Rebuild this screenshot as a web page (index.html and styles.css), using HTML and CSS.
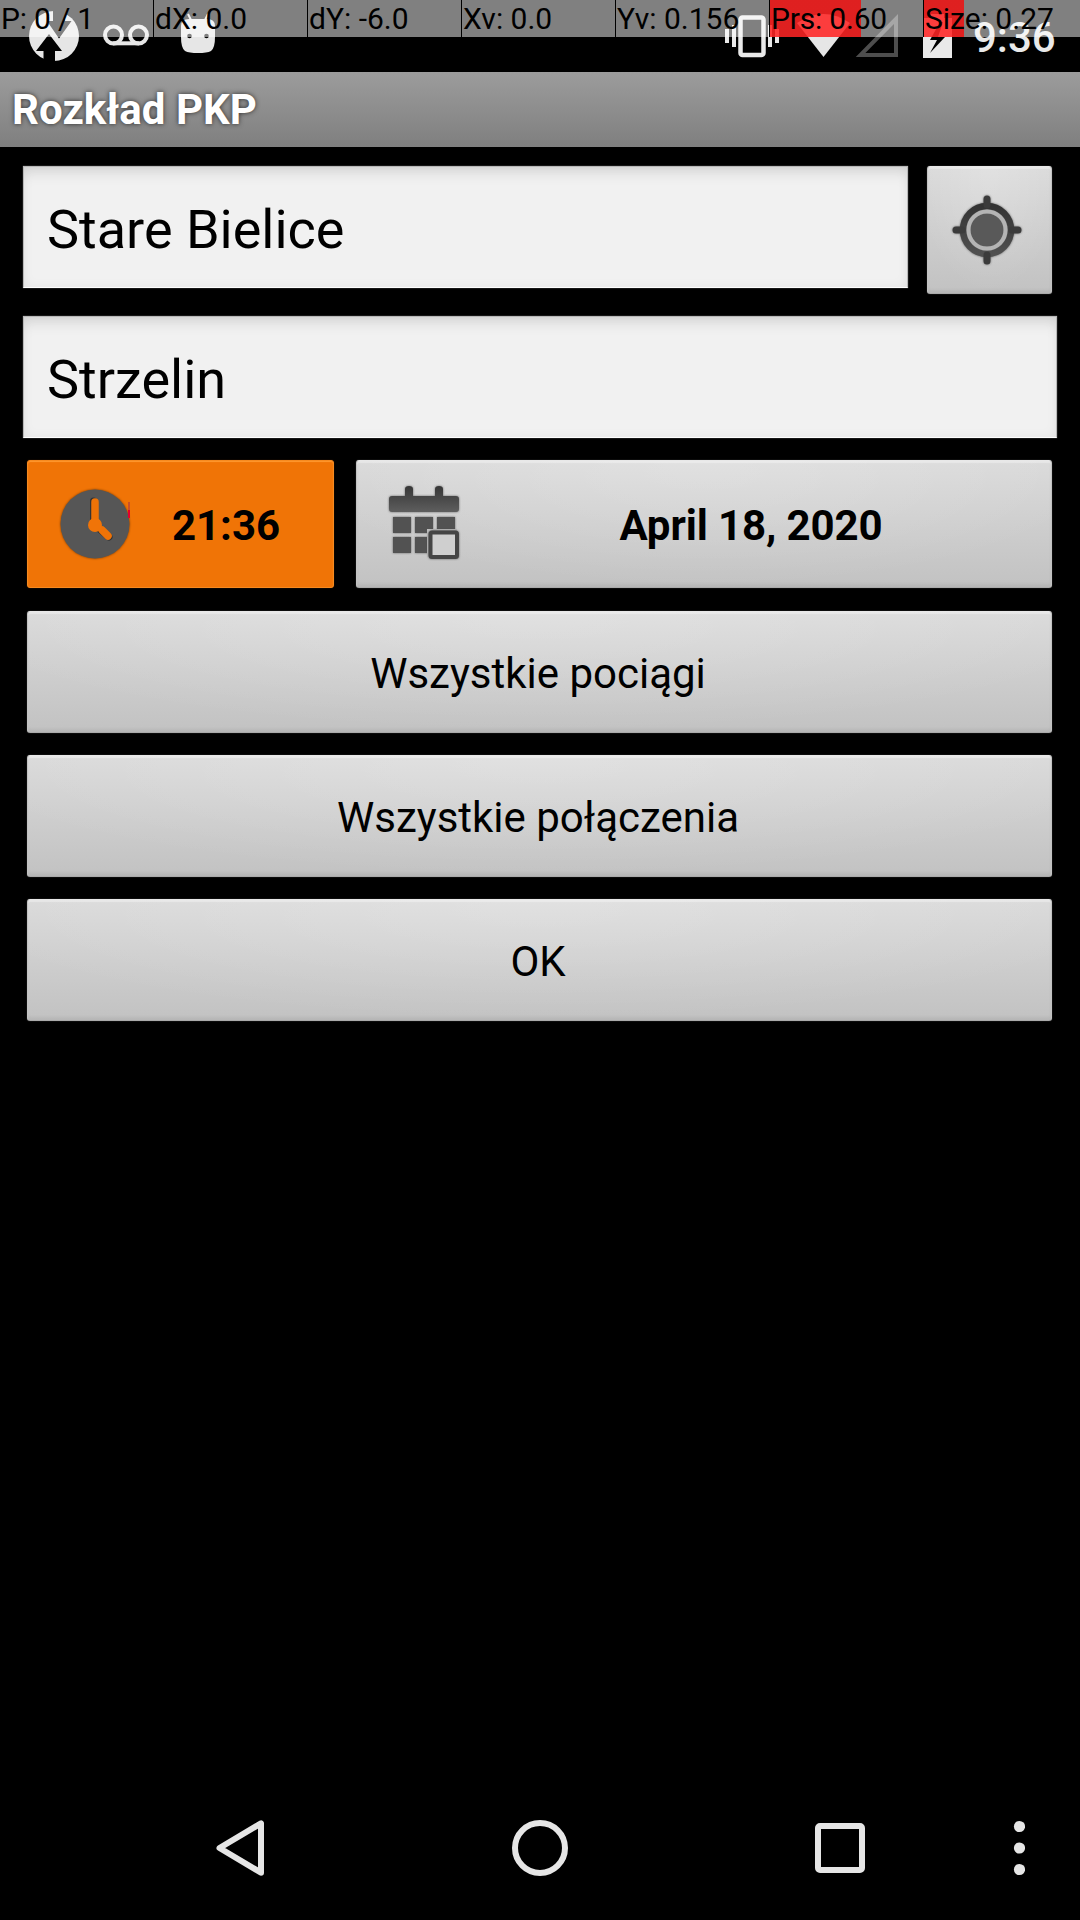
FILE: index.html
```html
<!DOCTYPE html>
<html lang="pl">
<head>
<meta charset="utf-8">
<title>Rozkład PKP</title>
<link rel="stylesheet" href="styles.css">
</head>
<body>
<header class="status">
  <div class="status-left">
    <svg width="72" height="72" viewBox="18 0 72 72"><circle cx="54" cy="36" r="25" fill="#e6e6e6"/><path d="M53 10V21H47L59 38.500L71.500 21H65V10Z" fill="#000"/><path d="M49 32L58.500 42L61 51L49 52L42 40Z" fill="#e6e6e6"/><path d="M49 34L36 51H43.500V63H55V51H62Z" fill="#000"/></svg>
    <svg width="72" height="72" viewBox="90 0 72 72" fill="none" stroke="#e6e6e6" stroke-width="4"><circle cx="113.500" cy="35" r="8.500"/><circle cx="138.500" cy="35" r="8.500"/><path d="M113 43.300H139"/></svg>
    <svg width="72" height="72" viewBox="162 0 72 72"><path d="M181 26Q181 19 189 19H207Q215 19 215 26V37Q215 48 211 51Q207 53 198 53Q189 53 185 51Q181 48 181 37Z" fill="#e6e6e6"/><path d="M188 14L191 20M208 14L205 20" stroke="#e6e6e6" stroke-width="2"/><circle cx="189.500" cy="36" r="2.300"/><circle cx="206.500" cy="36" r="2.300"/></svg>
  </div>
  <div class="status-right">
    <svg width="64" height="72" viewBox="720 0 64 72"><rect x="740.500" y="17.500" width="23" height="37.500" rx="2" fill="none" stroke="#e9e9e9" stroke-width="4.500"/><path d="M727 29V43M734 25V47M770 25V47M777 29V43" stroke="#e9e9e9" stroke-width="4"/></svg>
    <svg width="68" height="72" viewBox="784 0 68 72"><path d="M797 23Q823.500 5 850 23L823.500 57Z" fill="#e6e6e6"/></svg>
    <svg width="52" height="72" viewBox="852 0 52 72"><path d="M896 19V55H860.500Z" fill="none" stroke="#4d4d4d" stroke-width="4"/></svg>
    <svg width="60" height="72" viewBox="904 0 60 72"><path d="M923 18H931V14H944V18H952V58H923Z" fill="#e9e9e9"/><path d="M940 22L930 40H937L930 53L945 37H938L943 22Z" fill="#000"/></svg>
    <time class="clock">9:36</time>
  </div>
  <div class="pointer">
    <span class="cell tight">P: 0 / 1</span>
    <span class="cell">dX: 0.0</span>
    <span class="cell">dY: -6.0</span>
    <span class="cell">Xv: 0.0</span>
    <span class="cell">Yv: 0.156</span>
    <span class="cell level tight" style="--level: 91px">Prs: 0.60</span>
    <span class="cell level" style="--level: 40px">Size: 0.27</span>
  </div>
</header>
<h1 class="title">Rozkład PKP</h1>
<main class="form">
  <div class="row from">
    <div class="field">Stare Bielice</div>
    <button class="btn locate" aria-label="Lokalizacja">
      <svg width="80" height="80" viewBox="0 0 80 80"><defs><linearGradient id="ink" x2="0" y2="1"><stop offset="0" stop-color="#333"/><stop offset="1" stop-color="#505050"/></linearGradient></defs><g class="soft"><circle cx="40" cy="40" r="24" fill="none" stroke="url(#ink)" stroke-width="6.500"/><circle cx="40" cy="40" r="16.500" fill="#595959"/><circle cx="40" cy="40" r="18.500" fill="none" stroke="#b4b4b4" stroke-width="4"/><path d="M40 9V15M40 65V71M9 40H15M65 40H71" stroke="#3b3b3b" stroke-width="7" stroke-linecap="round"/></g></svg>
    </button>
  </div>
  <div class="field to">Strzelin</div>
  <div class="row when">
    <button class="btn time">
      <svg width="80" height="80" viewBox="0 0 80 80"><g class="soft"><circle cx="40" cy="40" r="34.500" fill="#565656"/><path d="M38.500 17V40L54 53" fill="none" stroke="#333" stroke-width="7" stroke-linecap="round"/><path d="M40 18V40M47 46L53 52" fill="none" stroke="#ee7307" stroke-width="7.500" stroke-linecap="round"/><circle cx="40" cy="41" r="7" fill="#f07408"/></g><path d="M74 18V26" stroke="#c8502a" stroke-width="2"/><path d="M74 26V34" stroke="#e5002c" stroke-width="2"/></svg>
      <span class="label">21:36</span>
    </button>
    <button class="btn date">
      <svg width="80" height="80" viewBox="0 3 80 80"><defs><linearGradient id="head" x2="0" y2="1"><stop offset="0" stop-color="#363636"/><stop offset="1" stop-color="#5e5e5e"/></linearGradient></defs><g class="soft"><path d="M5 18Q5 15 8 15H21V8Q21 5 25 5T29 8V15H51V8Q51 5 55 5T59 8V15H72Q75 15 75 18V28Q75 31 72 31H8Q5 31 5 28Z" fill="url(#head)"/><path d="M9 36H27V52H9ZM31 36H49V52H31ZM53 36H71V52H53ZM9 56H27V72H9ZM31 56H49V72H31Z" fill="#525252"/></g><rect x="43" y="48" width="30" height="28" fill="#c0c0c0"/><rect class="soft" x="46.500" y="51.500" width="26.500" height="24.500" rx="1.500" fill="#cfcfcf" stroke="#454545" stroke-width="4"/></svg>
      <span class="label">April 18, 2020</span>
    </button>
  </div>
  <button class="btn wide">Wszystkie pociągi</button>
  <button class="btn wide">Wszystkie połączenia</button>
  <button class="btn wide">OK</button>
</main>
<nav class="nav">
  <svg width="60" height="60" viewBox="0 0 60 60"><path d="M51 5.300V54.700L9.500 30Z"/></svg>
  <svg width="60" height="60" viewBox="0 0 60 60"><circle cx="30" cy="30" r="25"/></svg>
  <svg width="60" height="60" viewBox="0 0 60 60"><rect x="8" y="8" width="44" height="44" rx="2"/></svg>
  <svg class="dots" width="12" height="60" viewBox="0 0 12 60"><circle cx="6.500" cy="8.500" r="5.600"/><circle cx="6.500" cy="30" r="5.600"/><circle cx="6.500" cy="51.500" r="5.600"/></svg>
</nav>
</body>
</html>
```
FILE: styles.css
```css
* { box-sizing: border-box; }
body {
  margin: 0;
  width: 1080px;
  height: 1920px;
  display: flex;
  flex-direction: column;
  background: #000;
  font-family: Roboto, sans-serif;
  overflow: hidden;
}
svg { display: block; flex: none; }

.status {
  position: relative;
  height: 72px;
  display: flex;
  justify-content: space-between;
  padding: 0 24px 0 18px;
}
.status-left, .status-right { display: flex; }
.clock {
  width: 92px;
  padding-left: 9px;
  font-size: 42px;
  font-weight: 500;
  line-height: 75px;
  color: #e9e9e9;
  white-space: nowrap;
}

/* Pointer-location readout drawn over the status bar */
.pointer {
  position: absolute;
  inset: 0 0 auto 0;
  height: 37px;
  display: grid;
  grid-template-columns: 153px repeat(5, 153px) 156px;
  column-gap: 1px;
  font-size: 30px;
  line-height: 37px;
  color: #000;
}
.cell {
  padding-left: 1px;
  white-space: pre;
  background: rgba(255, 255, 255, 0.5);
  box-shadow: -1px 0 #000;
}
.tight { letter-spacing: -0.2px; }
.level {
  background:
    linear-gradient(rgba(255, 0, 0, 0.75), rgba(255, 0, 0, 0.75)) 0 0 / var(--level) 100% no-repeat,
    rgba(255, 255, 255, 0.5);
}

.title {
  margin: 0;
  height: 75px;
  padding-left: 12px;
  font-size: 42px;
  font-weight: 700;
  line-height: 75px;
  letter-spacing: 0.05px;
  color: #fff;
  background: linear-gradient(#9c9c9c, #7f7f7f);
  text-shadow: 0 0 5px rgba(0, 0, 0, 0.7);
}

.form {
  display: flex;
  flex-direction: column;
  padding: 19px 28px 0 27px;
}
.row { display: flex; align-items: flex-start; }
.field {
  height: 122px;
  padding-left: 23px;
  font-size: 54px;
  line-height: 126px;
  color: #000;
  background: #f1f1f1;
  border: 1px solid #b8b8b8;
  border-bottom-color: #fff;
  box-shadow: inset 0 12px 16px -8px rgba(0, 0, 0, 0.12), inset 0 0 12px rgba(0, 0, 0, 0.05), 0 0 1px #888;
}
.from { margin-left: -4px; gap: 19px; }
.from .field { width: 885px; }
.to { margin: 22px -5px 22px -4px; }

.btn {
  display: flex;
  align-items: center;
  justify-content: center;
  height: 128px;
  padding: 0;
  border: 1px solid #c2c2c2;
  border-top-color: #e8e8e8;
  border-bottom-color: #aaa;
  border-radius: 3px;
  font: 400 42px/50px Roboto, sans-serif;
  color: #000;
  background:
    radial-gradient(ellipse 60% 100% at 50% 0, rgba(255, 255, 255, 0.2), transparent),
    linear-gradient(#dadada, #c2c2c2);
  box-shadow: inset 0 2px 1px rgba(255, 255, 255, 0.35), inset 0 -3px 3px rgba(0, 0, 0, 0.06), 0 0 1px #777;
}
.soft { filter: drop-shadow(0 0 1px rgba(0, 0, 0, 0.5)); }
.locate { flex: 1; padding-right: 5px; }
.when { gap: 22px; margin-bottom: 23px; }
.time, .date { justify-content: flex-start; padding-left: 27px; font-weight: 700; }
.time {
  width: 307px;
  background: #f07406;
  border-color: #f58a20;
  box-shadow: inset 0 1px 1px #ff9a30, 0 0 1px #7a3a00;
}
.date { flex: 1; }
.label { flex: 1; padding-top: 3px; text-align: center; }
.time .label { padding-right: 16px; }
.date .label { padding-right: 13px; letter-spacing: -0.1px; }
.wide { height: 122px; margin-bottom: 22px; padding: 4px 3px 0 0; }

.nav {
  margin-top: auto;
  height: 144px;
  display: flex;
  align-items: center;
  padding-left: 210px;
  gap: 240px;
}
.nav svg { fill: none; stroke: #e6e6e6; stroke-width: 6; stroke-linejoin: round; }
.nav .dots { margin-left: -97px; fill: #e6e6e6; stroke: none; }
```
